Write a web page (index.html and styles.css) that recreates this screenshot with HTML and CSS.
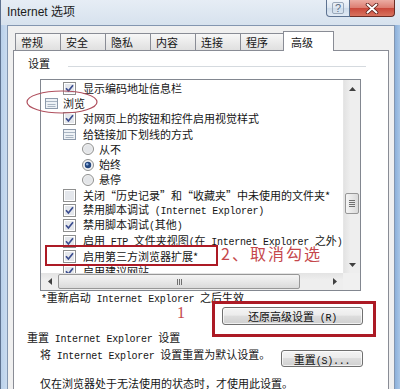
FILE: index.html
```html
<!DOCTYPE html>
<html lang="zh-CN">
<head>
<meta charset="utf-8">
<title>Internet 选项</title>
<link rel="stylesheet" href="styles.css">
</head>
<body>
<div class="window">
  <div class="titlebar">
    <span class="title">Internet 选项</span>
    <div class="caption">
      <div class="cap-help"><span class="q">?</span></div>
      <div class="cap-close">
        <svg width="14" height="11" viewBox="0 0 14 11"><path d="M2.5 1.5 L11.5 9.5 M11.5 1.5 L2.5 9.5" stroke="#5a1d16" stroke-width="3.6" stroke-linecap="round"/><path d="M2.5 1.5 L11.5 9.5 M11.5 1.5 L2.5 9.5" stroke="#fff" stroke-width="2" stroke-linecap="round"/></svg>
      </div>
    </div>
  </div>
  <div class="client">
    <div class="tabs">
      <div class="tab">常规</div>
      <div class="tab">安全</div>
      <div class="tab">隐私</div>
      <div class="tab">内容</div>
      <div class="tab">连接</div>
      <div class="tab">程序</div>
      <div class="tab active">高级</div>
    </div>
    <div class="panel">
      <div class="group-head"><span>设置</span><span class="rule"></span></div>
      <div class="listbox">
        <div class="items">
          <div class="row l1"><svg class="ico" viewBox="0 0 13 13"><rect x=".5" y=".5" width="12" height="12" fill="#fff" stroke="#8e8f8f"/><rect x="2" y="2" width="9" height="9" fill="#e4e7ec"/><path d="M3 6.3 L5.4 9 L10 3.3" stroke="#3b4d8f" stroke-width="1.7" fill="none"/></svg><span>显示编码地址信息栏</span></div>
          <div class="row l0"><svg class="ico grp" viewBox="0 0 13 13"><rect x=".5" y="1.5" width="12" height="10" fill="#eef2f6" stroke="#8d9aab"/><path d="M1 4.5 H12 M2.5 7.5 H10.5 M2.5 9.5 H10.5" stroke="#a9b5c3"/></svg><span>浏览</span></div>
          <div class="row l1"><svg class="ico" viewBox="0 0 13 13"><rect x=".5" y=".5" width="12" height="12" fill="#fff" stroke="#8e8f8f"/><rect x="2" y="2" width="9" height="9" fill="#e4e7ec"/><path d="M3 6.3 L5.4 9 L10 3.3" stroke="#3b4d8f" stroke-width="1.7" fill="none"/></svg><span>对网页上的按钮和控件启用视觉样式</span></div>
          <div class="row l1"><svg class="ico grp" viewBox="0 0 13 13"><rect x=".5" y="1.5" width="12" height="10" fill="#eef2f6" stroke="#8d9aab"/><path d="M1 4.5 H12 M2.5 7.5 H10.5 M2.5 9.5 H10.5" stroke="#a9b5c3"/></svg><span>给链接加下划线的方式</span></div>
          <div class="row l2"><svg class="radio" viewBox="0 0 12 12"><circle cx="6" cy="6" r="5.5" fill="#f1f1f1" stroke="#8e8f8f"/><circle cx="6" cy="6" r="4" fill="#e3e5e8"/></svg><span>从不</span></div>
          <div class="row l2"><svg class="radio" viewBox="0 0 12 12"><circle cx="6" cy="6" r="5.5" fill="#f1f1f1" stroke="#8e8f8f"/><circle cx="6" cy="6" r="3.2" fill="#24477f"/><circle cx="5.2" cy="5.2" r="1.2" fill="#8fb0de"/></svg><span>始终</span></div>
          <div class="row l2"><svg class="radio" viewBox="0 0 12 12"><circle cx="6" cy="6" r="5.5" fill="#f1f1f1" stroke="#8e8f8f"/><circle cx="6" cy="6" r="4" fill="#e3e5e8"/></svg><span>悬停</span></div>
          <div class="row l1"><svg class="ico" viewBox="0 0 13 13"><rect x=".5" y=".5" width="12" height="12" fill="#fff" stroke="#8e8f8f"/><rect x="2" y="2" width="9" height="9" fill="#e4e7ec"/></svg><span>关闭“历史记录”和“收藏夹”中未使用的文件夹*</span></div>
          <div class="row l1"><svg class="ico" viewBox="0 0 13 13"><rect x=".5" y=".5" width="12" height="12" fill="#fff" stroke="#8e8f8f"/><rect x="2" y="2" width="9" height="9" fill="#e4e7ec"/><path d="M3 6.3 L5.4 9 L10 3.3" stroke="#3b4d8f" stroke-width="1.7" fill="none"/></svg><span>禁用脚本调试<span class="en"> (Internet Explorer)</span></span></div>
          <div class="row l1"><svg class="ico" viewBox="0 0 13 13"><rect x=".5" y=".5" width="12" height="12" fill="#fff" stroke="#8e8f8f"/><rect x="2" y="2" width="9" height="9" fill="#e4e7ec"/><path d="M3 6.3 L5.4 9 L10 3.3" stroke="#3b4d8f" stroke-width="1.7" fill="none"/></svg><span>禁用脚本调试<span class="en">(</span>其他<span class="en">)</span></span></div>
          <div class="row l1"><svg class="ico" viewBox="0 0 13 13"><rect x=".5" y=".5" width="12" height="12" fill="#fff" stroke="#8e8f8f"/><rect x="2" y="2" width="9" height="9" fill="#e4e7ec"/><path d="M3 6.3 L5.4 9 L10 3.3" stroke="#3b4d8f" stroke-width="1.7" fill="none"/></svg><span>启用<span class="en"> FTP </span>文件夹视图<span class="en">(</span>在<span class="en"> Internet Explorer </span>之外<span class="en">)</span></span></div>
          <div class="row l1"><svg class="ico" viewBox="0 0 13 13"><rect x=".5" y=".5" width="12" height="12" fill="#fff" stroke="#8e8f8f"/><rect x="2" y="2" width="9" height="9" fill="#e4e7ec"/><path d="M3 6.3 L5.4 9 L10 3.3" stroke="#3b4d8f" stroke-width="1.7" fill="none"/></svg><span>启用第三方浏览器扩展*</span></div>
          <div class="row l1"><svg class="ico" viewBox="0 0 13 13"><rect x=".5" y=".5" width="12" height="12" fill="#fff" stroke="#8e8f8f"/><rect x="2" y="2" width="9" height="9" fill="#e4e7ec"/><path d="M3 6.3 L5.4 9 L10 3.3" stroke="#3b4d8f" stroke-width="1.7" fill="none"/></svg><span>启用建议网站</span></div>
        </div>
        <div class="vscroll">
          <div class="arrow"><svg width="7" height="4" viewBox="0 0 7 4"><path d="M0 4 L3.5 0 L7 4Z" fill="#404040"/></svg></div>
          <div class="vtrack"><div class="vthumb"><span></span><span></span><span></span><span></span></div></div>
          <div class="arrow"><svg width="7" height="4" viewBox="0 0 7 4"><path d="M0 0 L3.5 4 L7 0Z" fill="#404040"/></svg></div>
        </div>
        <div class="hscroll">
          <div class="harrow"><svg width="4" height="7" viewBox="0 0 4 7"><path d="M4 0 L0 3.5 L4 7Z" fill="#404040"/></svg></div>
          <div class="htrack"><div class="hthumb"><span></span><span></span><span></span></div></div>
          <div class="harrow"><svg width="4" height="7" viewBox="0 0 4 7"><path d="M0 0 L4 3.5 L0 7Z" fill="#404040"/></svg></div>
        </div>
        <div class="corner"></div>
      </div>
      <div class="note"><span class="en">*</span>重新启动<span class="en"> Internet Explorer </span>之后生效</div>
      <div class="btn-row restore"><button class="btn wide">还原高级设置<span class="en"> (R)</span></button></div>
      <div class="reset-title">重置<span class="en"> Internet Explorer </span>设置</div>
      <div class="reset-row"><span>将<span class="en"> Internet Explorer </span>设置重置为默认设置。</span><button class="btn narrow">重置<span class="en">(S)...</span></button></div>
      <div class="hint">仅在浏览器处于无法使用的状态时，才使用此设置。</div>
    </div>
  </div>

  <svg class="ann-ellipse" width="72" height="24" viewBox="0 0 72 24"><ellipse cx="36" cy="12" rx="35" ry="11" fill="none" stroke="#b0505e" stroke-width="1.2"/></svg>
  <div class="ann-rect item"></div>
  <div class="ann-rect button"></div>
  <div class="ann-text two">2、取消勾选</div>
  <div class="ann-text one">1</div>
</div>
</body>
</html>
```

FILE: styles.css
```css
* { box-sizing: border-box; }

body {
  margin: 0;
  width: 400px;
  height: 389px;
  overflow: hidden;
  font-family: "Noto Sans CJK SC", sans-serif;
  font-size: 11px;
  color: #151515;
}

.window {
  position: relative;
  width: 400px;
  height: 389px;
  display: flex;
  flex-direction: column;
  background: linear-gradient(90deg, #5f7390 0, #5f7390 1px, #b9d0ea 1px, #cadcf0 7px, #cadcf0 394px, #8cb0da 395px, #a9c6e6 400px);
}

.titlebar {
  height: 25px;
  display: flex;
  justify-content: space-between;
  background: linear-gradient(180deg, #e6edf5 0, #d7e2ee 100%);
  border-left: 1px solid #5f7390;
}

.title {
  padding-left: 6px;
  line-height: 24px;
  font-family: "Liberation Sans", "Noto Sans CJK SC", sans-serif;
  font-size: 12px;
  color: #1b1b1b;
}

.caption {
  display: flex;
  align-items: flex-start;
  margin-right: 5px;
}

.cap-help {
  width: 24px;
  height: 17px;
  border: 1px solid #5d7291;
  border-top: none;
  border-radius: 0 0 0 4px;
  background: linear-gradient(180deg, #f1f5fa 0, #dce6f1 50%, #cddbea 51%, #e1eaf4 100%);
  display: flex;
  align-items: center;
  justify-content: center;
}

.cap-help .q {
  font-family: "Liberation Sans", sans-serif;
  font-size: 11px;
  color: #5a6c83;
  border: 1px solid #9aa8ba;
  line-height: 10px;
  padding: 0 2px;
  border-radius: 2px;
}

.cap-close {
  width: 45px;
  height: 17px;
  border: 1px solid #6b2c24;
  border-top: none;
  border-left: none;
  border-radius: 0 0 4px 0;
  background: linear-gradient(180deg, #ebaca3 0, #dc7c70 50%, #c9473a 51%, #d8735f 100%);
  display: flex;
  align-items: center;
  justify-content: center;
}

.client {
  flex: 1;
  margin: 0 5px 0 7px;
  background: #f0f0f0;
  border: 1px solid #8396b0;
  border-bottom: none;
  padding-top: 5px;
  display: flex;
  flex-direction: column;
  min-height: 0;
}

.tabs {
  height: 19px;
  display: flex;
  align-items: flex-end;
  margin-left: 7px;
}

.tab {
  width: 46px;
  height: 17px;
  margin-left: -1px;
  border: 1px solid #898c95;
  border-bottom: none;
  background: linear-gradient(180deg, #f7f7f7 0, #ebebeb 50%, #e0e0e0 100%);
  padding-left: 5px;
  line-height: 17px;
  white-space: nowrap;
}

.tab:first-child { margin-left: 0; }

.tab.active {
  position: relative;
  z-index: 1;
  width: 51px;
  height: 20px;
  margin-left: -3px;
  margin-bottom: -1px;
  background: #fff;
  padding-left: 7px;
  line-height: 20px;
}

.panel {
  flex: 1;
  margin: 0 5px;
  background: #fff;
  border: 1px solid #898c95;
  border-bottom: none;
  padding-top: 5px;
  display: flex;
  flex-direction: column;
  min-height: 0;
}

.group-head {
  display: flex;
  height: 14px;
  line-height: 14px;
  margin-left: 14px;
}

.group-head .rule {
  flex: 1;
  height: 1px;
  margin: 10px 22px 0 18px;
  background: #d5dadf;
}

.listbox {
  margin: 9px 0 0 26px;
  width: 321px;
  height: 212px;
  flex: none;
  border: 1px solid #828790;
  display: grid;
  grid-template-columns: 1fr 17px;
  grid-template-rows: 1fr 17px;
  overflow: hidden;
}

.items {
  overflow: hidden;
  padding-top: 0.5px;
}

.row {
  height: 15.3px;
  display: flex;
  align-items: center;
  white-space: nowrap;
  line-height: 15px;
}

.row.l0 { padding-left: 4px; }
.row.l0 .ico { margin-right: 5px; }
.row.l1 { padding-left: 22px; }
.row.l1 .ico { margin-right: 7px; }
.row.l2 { padding-left: 41px; }

.ico { width: 13px; height: 13px; flex: none; }
.radio { width: 12px; height: 12px; flex: none; margin-right: 5px; }

.en {
  font-family: "Liberation Mono", monospace;
  font-size: 10px;
  letter-spacing: -0.25px;
}

.vscroll {
  display: flex;
  flex-direction: column;
  background: linear-gradient(90deg, #e3e3e3 0, #eeeeee 40%, #eeeeee 100%);
  border-left: 1px solid #e6e6e6;
}

.arrow {
  height: 17px;
  display: flex;
  align-items: center;
  justify-content: center;
}

.vtrack { flex: 1; }

.vthumb {
  margin: 96px 1px 0 1px;
  height: 21px;
  border: 1px solid #979797;
  border-radius: 2px;
  background: linear-gradient(90deg, #f4f4f4 0, #e8e8e8 50%, #dadada 100%);
  display: flex;
  flex-direction: column;
  align-items: center;
  justify-content: center;
  gap: 1px;
}

.vthumb span {
  width: 6px;
  height: 1px;
  background: #6f6f6f;
}

.hscroll {
  display: flex;
  background: linear-gradient(180deg, #e3e3e3 0, #eeeeee 40%, #eeeeee 100%);
}

.harrow {
  width: 17px;
  display: flex;
  align-items: center;
  justify-content: center;
}

.htrack { flex: 1; }

.hthumb {
  width: 242px;
  height: 15px;
  margin-top: 1px;
  border: 1px solid #979797;
  border-radius: 2px;
  background: linear-gradient(180deg, #f4f4f4 0, #e8e8e8 50%, #dadada 100%);
  display: flex;
  align-items: center;
  justify-content: center;
  gap: 1px;
}

.hthumb span {
  width: 1px;
  height: 6px;
  background: #6f6f6f;
}

.corner { background: #f0f0f0; }

.note {
  margin-left: 27px;
  line-height: 13px;
  height: 13px;
  white-space: nowrap;
}

.btn-row {
  display: flex;
  justify-content: flex-end;
  padding-right: 25px;
}

.restore { margin-top: 3px; }

.btn {
  font-family: "Noto Sans CJK SC", sans-serif;
  font-size: 11px;
  color: #111;
  height: 18px;
  padding: 0;
  line-height: 16px;
  border: 1px solid #707070;
  border-radius: 3px;
  background: linear-gradient(180deg, #f4f4f4 0, #ececec 45%, #dddddd 50%, #d0d0d0 100%);
  box-shadow: inset 0 0 0 1px rgba(255,255,255,0.7);
  white-space: nowrap;
}

.btn.wide { width: 141px; }
.btn.narrow { width: 82px; height: 17px; margin-top: 2px; margin-right: 25px; }

.reset-title {
  margin: 6px 0 0 13px;
  line-height: 13px;
  height: 13px;
  white-space: nowrap;
}

.reset-row {
  display: flex;
  justify-content: space-between;
  align-items: flex-start;
  margin: 4px 0 0 26px;
  line-height: 13px;
  white-space: nowrap;
}

.hint {
  margin: 10px 0 0 26px;
  line-height: 13px;
  white-space: nowrap;
}

/* annotation overlays */
.ann-ellipse {
  position: absolute;
  left: 26px;
  top: 90px;
}

.ann-rect {
  position: absolute;
  border: 2px solid #ac1a25;
}

.ann-rect.item {
  left: 45px;
  top: 245px;
  width: 173px;
  height: 21px;
}

.ann-rect.button {
  left: 212px;
  top: 301px;
  width: 164px;
  height: 36px;
  border-width: 3px;
}

.ann-text {
  position: absolute;
  color: #c5474c;
  white-space: nowrap;
}

.ann-text.two {
  left: 221px;
  top: 243px;
  font-size: 16px;
  line-height: 20px;
  letter-spacing: 2px;
}

.ann-text.one {
  left: 177px;
  top: 305px;
  font-family: "Liberation Serif", serif;
  font-size: 16px;
  line-height: 15px;
}
```
